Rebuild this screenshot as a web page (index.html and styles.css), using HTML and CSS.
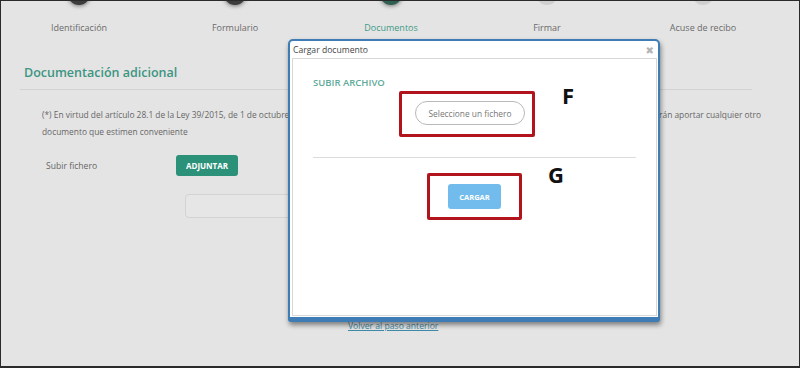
FILE: index.html
```html
<!DOCTYPE html>
<html lang="es">

<head>
    <meta charset="UTF-8">
    <meta name="viewport" content="width=device-width, initial-scale=1.0">
    <title>Cargar documento</title>
    <link rel="stylesheet" href="styles.css">
</head>

<body>
    <div class="frame">
        <!-- pasos del tramite -->
        <div class="steps">
            <div class="step done"><span class="dot"></span><span class="label">Identificación</span></div>
            <div class="step done"><span class="dot"></span><span class="label">Formulario</span></div>
            <div class="step current"><span class="dot"></span><span class="label">Documentos</span></div>
            <div class="step"><span class="dot"></span><span class="label">Firmar</span></div>
            <div class="step"><span class="dot"></span><span class="label">Acuse de recibo</span></div>
        </div>

        <div class="section">
            <h2 class="section-title">Documentación adicional</h2>

            <div class="note">
                <div class="note-line">
                    <span class="note-start">(*) En virtud del artículo 28.1 de la Ley 39/2015, de 1 de octubre,</span>
                    <span class="note-end">interesados podrán aportar cualquier otro</span>
                </div>
                <div>documento que estimen conveniente</div>
            </div>

            <div class="upload-row">
                <span class="upload-label">Subir fichero</span>
                <button class="btn-green">ADJUNTAR</button>
            </div>

            <div class="file-box"></div>

            <a class="back-link" href="#">Volver al paso anterior</a>
        </div>

        <!-- ventana modal -->
        <div class="modal">
            <div class="modal-head">
                <span>Cargar documento</span>
                <span class="close">&#x2716;</span>
            </div>
            <div class="modal-body">
                <div class="modal-title">SUBIR ARCHIVO</div>
                <div class="row-f">
                    <div class="mark mark-f">
                        <button class="btn-pill">Seleccione un fichero</button>
                    </div>
                </div>
                <div class="modal-sep"></div>
                <div class="row-g">
                    <div class="mark mark-g">
                        <button class="btn-blue">CARGAR</button>
                    </div>
                </div>
            </div>
        </div>

        <span class="tag tag-f">F</span>
        <span class="tag tag-g">G</span>
    </div>
</body>

</html>
```

FILE: styles.css
```css
body {
    margin: 0;
    font-family: "Open Sans", "DejaVu Sans", sans-serif;
}

.frame {
    position: relative;
    width: 800px;
    height: 368px;
    box-sizing: border-box;
    border: 1px solid #2a2a2a;
    border-bottom-width: 2px;
    background: #e4e4e4;
    overflow: hidden;
    color: #666;
}

/* pasos */
.steps {
    display: flex;
}

.step {
    width: 156px;
    display: flex;
    flex-direction: column;
    align-items: center;
}

.dot {
    width: 22px;
    height: 22px;
    margin-top: -18px;
    border-radius: 50%;
    background: #cfcfcf;
}

.step.done .dot {
    background: #3c3c3c;
    box-shadow: 0 1px 4px rgba(0, 0, 0, 0.5);
}

.step.current .dot {
    background: #2f5f52;
    box-shadow: 0 1px 4px rgba(0, 0, 0, 0.5);
}

.label {
    margin-top: 17px;
    font-size: 9px;
    line-height: 12px;
    color: #6b6b6b;
}

.step.current .label {
    color: #3f9a86;
}

/* seccion */
.section {
    margin: 0 47px 0 19px;
}

.section-title {
    margin: 30px 0 0;
    padding: 0 0 7px 4px;
    font-size: 12.5px;
    line-height: 18px;
    font-weight: 600;
    color: #3c9582;
    border-bottom: 1px solid #d2d2d2;
}

.note {
    margin: 16px 0 0 22px;
    width: 719px;
    font-size: 8.4px;
    line-height: 17px;
    white-space: nowrap;
    color: #666;
}

.note-line {
    display: flex;
    justify-content: space-between;
}

.note-start {
    min-width: 0;
    overflow: hidden;
}

.note-end {
    flex-shrink: 0;
}

.upload-row {
    display: flex;
    align-items: center;
    margin: 15px 0 0 26px;
}

.upload-label {
    width: 130px;
    font-size: 8.6px;
    color: #666;
}

.btn-green {
    width: 62px;
    height: 21px;
    border: none;
    border-radius: 3px;
    background: #2b9179;
    color: #fff;
    font-family: inherit;
    font-size: 8px;
    font-weight: 700;
    padding: 0;
}

.file-box {
    width: 200px;
    height: 22px;
    margin: 18px 0 0 165px;
    border: 1px solid #d3d3d3;
    border-radius: 4px;
    background: #e6e6e6;
}

.back-link {
    display: block;
    margin: 102px 0 0 328px;
    font-size: 8.6px;
    line-height: 12px;
    color: #3f8aa5;
}

/* modal */
.modal {
    position: absolute;
    left: 287px;
    top: 38px;
    width: 368px;
    height: 276px;
    border: 2px solid #3d7cb5;
    border-bottom-width: 5px;
    border-radius: 5px 5px 3px 3px;
    background: #fff;
    box-shadow: 1px 3px 5px rgba(0, 0, 0, 0.45);
    display: flex;
    flex-direction: column;
}

.modal-head {
    display: flex;
    justify-content: space-between;
    align-items: center;
    height: 17px;
    padding: 0 4px 0 3px;
    font-size: 8.6px;
    color: #444;
}

.close {
    font-size: 10px;
    color: #b4b4b4;
}

.modal-body {
    flex: 1;
    margin: 0 1px 1px 2px;
    border: 1px solid #d8d8d8;
    padding: 18px 20px 0;
}

.modal-title {
    font-size: 9.5px;
    line-height: 12px;
    font-weight: 600;
    color: #5eaa9a;
}

.row-f {
    display: flex;
    padding-left: 86px;
    margin-top: 2px;
}

.mark {
    border: 3px solid #b1141d;
    border-radius: 2px;
}

.mark-f {
    width: 136px;
    height: 46px;
    display: flex;
    align-items: center;
    box-sizing: border-box;
    padding: 0 6px 2px 13px;
}

.btn-pill {
    width: 110px;
    height: 24px;
    border: 1px solid #b9b9b9;
    border-radius: 12px;
    background: #fff;
    font-family: inherit;
    font-size: 8.4px;
    color: #777;
    padding: 0;
}

.modal-sep {
    margin-top: 20px;
    border-top: 1px solid #dcdcdc;
}

.row-g {
    display: flex;
    justify-content: center;
    margin-top: 15px;
}

.mark-g {
    width: 95px;
    height: 47px;
    box-sizing: border-box;
    display: flex;
    align-items: center;
    justify-content: center;
}

.btn-blue {
    width: 53px;
    height: 25px;
    border: none;
    border-radius: 3px;
    background: #72bced;
    color: #fff;
    font-family: inherit;
    font-size: 7.5px;
    font-weight: 700;
    padding: 0;
}

/* anotaciones */
.tag {
    position: absolute;
    font-family: "Open Sans", sans-serif;
    font-weight: 700;
    font-size: 22px;
    line-height: 22px;
    color: #111;
}

.tag-f {
    left: 561px;
    top: 83px;
}

.tag-g {
    left: 547px;
    top: 162px;
}
```
